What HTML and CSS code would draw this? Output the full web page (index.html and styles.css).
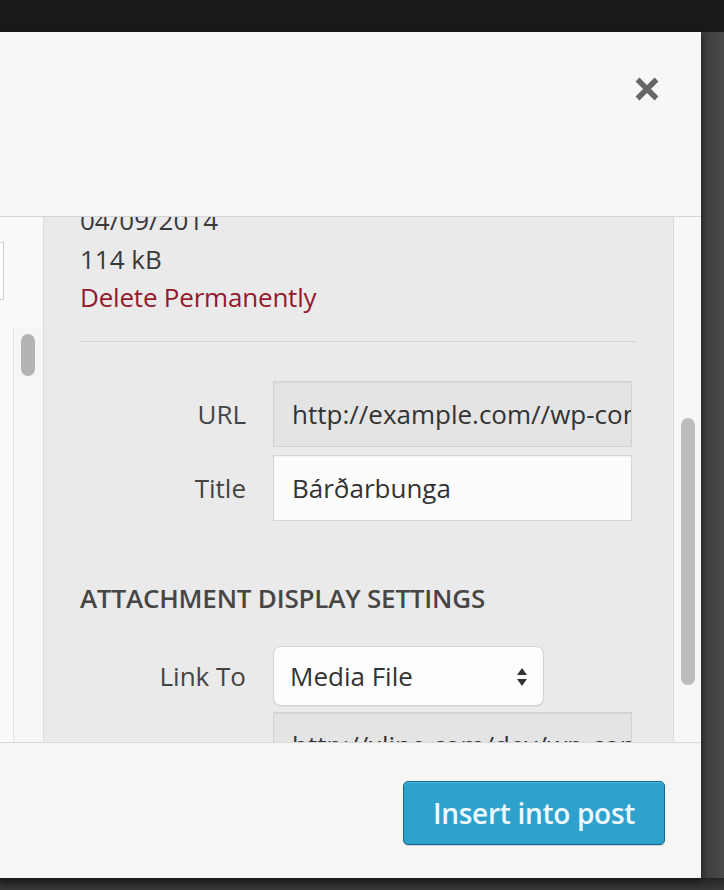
FILE: index.html
```html
<!DOCTYPE html>
<html lang="en">
<head>
<meta charset="utf-8">
<title>Attachment Details</title>
<link rel="stylesheet" href="styles.css">
</head>
<body>
<div class="top-band"></div>
<div class="stage">
  <div class="modal">
    <header class="m-head">
      <button class="close" aria-label="Close">
        <svg width="26" height="26" viewBox="0 0 26 26"><path d="M3.5 3.5 L22.5 22.5 M22.5 3.5 L3.5 22.5" stroke="#666" stroke-width="5.5" fill="none"/></svg>
      </button>
    </header>
    <div class="m-body">
      <aside class="browser">
        <div class="peek-box"></div>
        <div class="track"><div class="thumb-small"></div></div>
      </aside>
      <section class="details">
        <div class="details-inner">
          <div class="meta">04/09/2014</div>
          <div class="meta">114 kB</div>
          <div class="meta delete">Delete Permanently</div>
          <hr class="divider">
          <div class="setting">
            <label class="lbl">URL</label>
            <input class="field ro" readonly value="http://example.com//wp-content/uploads/2014/09/bardarbunga.jpg">
          </div>
          <div class="setting gap8">
            <label class="lbl">Title</label>
            <input class="field" value="Bárðarbunga">
          </div>
          <h3 class="section-title">Attachment Display Settings</h3>
          <div class="setting">
            <label class="lbl">Link To</label>
            <div class="select">
              <span>Media File</span>
              <svg width="10" height="20" viewBox="0 0 10 20"><path d="M0 8 L5 1 L10 8 Z M0 12 L10 12 L5 19 Z" fill="#333"/></svg>
            </div>
          </div>
          <div class="setting gap6">
            <span class="lbl"></span>
            <input class="field ro" readonly value="http://xline.com/dev/wp-content/uploads/2014/09/bardarbunga.jpg">
          </div>
        </div>
      </section>
      <div class="vscroll"><div class="thumb-big"></div></div>
    </div>
    <footer class="m-foot">
      <button class="primary">Insert into post</button>
    </footer>
  </div>
  <div class="side-dark"></div>
</div>
<div class="bottom-dark"></div>
</body>
</html>
```
FILE: styles.css
```css
* { box-sizing: border-box; }
html, body { margin: 0; padding: 0; }
body {
  width: 724px;
  height: 890px;
  overflow: hidden;
  background: #2c2c2c;
  font-family: "Open Sans", "DejaVu Sans", sans-serif;
  color: #333;
}
.top-band { height: 32px; background: #1b1a1a; }
.stage { display: flex; height: 846px; }
.modal {
  width: 701px;
  height: 846px;
  background: #f6f6f6;
  display: flex;
  flex-direction: column;
  box-shadow: 0 3px 8px rgba(0,0,0,0.5);
  position: relative;
  z-index: 1;
}
.side-dark {
  flex: 1;
  background: linear-gradient(90deg, #3c3c3c, #494949);
}
.bottom-dark { height: 12px; background: linear-gradient(180deg, #262626, #383838); }

.m-head {
  height: 185px;
  border-bottom: 1px solid #d6d6d6;
  background: #f7f7f7;
  display: flex;
  justify-content: flex-end;
  align-items: flex-start;
  padding: 44px 41px 0 0;
}
.close {
  border: 0;
  background: none;
  padding: 0;
  width: 26px;
  height: 26px;
  display: block;
}
.close svg { display: block; }

.m-body {
  height: 525px;
  display: flex;
  overflow: hidden;
}
.browser {
  width: 44px;
  background: #fafafa;
  border-right: 1px solid #dadada;
  display: flex;
  flex-direction: column;
}
.peek-box {
  width: 4px;
  height: 58px;
  margin-top: 25px;
  background: #fff;
  border: 1px solid #d0d0d0;
  border-left: 0;
}
.track {
  flex: 1;
  margin: 28px 0 0 13px;
  border-left: 1px solid #e2e2e2;
  background: #f6f6f6;
  padding: 6px 0 0 7px;
}
.thumb-small {
  width: 14px;
  height: 42px;
  border-radius: 7px;
  background: #b4b4b4;
}
.details {
  width: 630px;
  background: #eaeaea;
  border-right: 1px solid #dcdcdc;
  overflow: hidden;
}
.details-inner {
  margin-top: -16px;
  padding: 0 37px 0 36px;
}
.meta {
  font-size: 26px;
  line-height: 38.5px;
  color: #3a3a3a;
}
.delete { color: #931a2b; letter-spacing: -0.2px; }
.divider {
  border: 0;
  border-top: 1px solid #d3d3d3;
  margin: 24px 0 39px;
  height: 0;
}
.setting {
  display: grid;
  grid-template-columns: 166px 359px;
  column-gap: 27px;
  align-items: center;
}
.gap8 { margin-top: 8px; }
.gap6 { margin-top: 6px; }
.lbl {
  text-align: right;
  font-size: 26px;
  color: #444;
}
.field {
  width: 359px;
  height: 66px;
  border: 1px solid #d6d6d6;
  background: #fcfcfc;
  font-family: "Open Sans", "DejaVu Sans", sans-serif;
  font-size: 26px;
  color: #333;
  padding: 0 0 0 18px;
  margin: 0;
  box-shadow: inset 0 1px 2px rgba(0,0,0,0.06);
  outline: none;
}
.field.ro { background: #e4e4e4; border-color: #d2d2d2; }
.section-title {
  margin: 59px 0 30px;
  font-size: 26px;
  line-height: 36px;
  font-weight: 600;
  text-transform: uppercase;
  color: #464646;
  letter-spacing: -0.2px;
}
.select {
  width: 271px;
  height: 60px;
  border: 1px solid #d4d4d4;
  border-radius: 8px;
  background: #fdfdfd;
  box-shadow: 0 1px 1px rgba(0,0,0,0.06);
  display: flex;
  align-items: center;
  justify-content: space-between;
  padding: 0 16px 0 16px;
  font-size: 26px;
  color: #333;
}
.select svg { display: block; margin-top: 2px; }
.vscroll {
  width: 27px;
  background: #f7f7f7;
  padding: 201px 0 0 7px;
}
.thumb-big {
  width: 14px;
  height: 267px;
  border-radius: 7px;
  background: #bcbcbc;
}

.m-foot {
  flex: 1;
  border-top: 1px solid #dadada;
  background: #f6f6f6;
  display: flex;
  justify-content: flex-end;
  align-items: flex-start;
  padding: 38px 36px 0 0;
}
.primary {
  width: 262px;
  height: 64px;
  background: #2ea2cc;
  border: 1px solid #0f6a91;
  border-radius: 5px;
  color: #eef9ff;
  font-family: "Open Sans", "DejaVu Sans", sans-serif;
  font-size: 28px;
  font-weight: 600;
  letter-spacing: -0.3px;
  box-shadow: inset 0 1px 0 rgba(120,200,230,0.5), 0 1px 0 rgba(0,0,0,0.15);
  padding: 0;
}
```
